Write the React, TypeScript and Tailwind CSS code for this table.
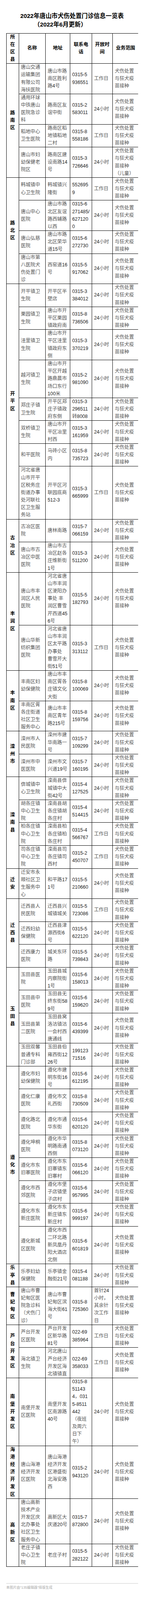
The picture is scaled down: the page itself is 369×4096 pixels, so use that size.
import React from 'react';

type Row = { n: string; a: string; p: string; t?: string; s?: string };
type Group = { d: string; rows: Row[] };

const W = '工作日';
const H = '24小时';
const SCOPE = '犬伤处置|与狂犬疫|苗接种';

const groups: Group[] = [
  {
    d: '路南区',
    rows: [
      { n: '唐山交通|运输集团|有限公司|海扶医院', a: '唐山市路|南区胜利|路4号', p: '0315-5|936551', t: W },
      { n: '通用环球|中铁唐山|医院急诊|科', a: '路南区友|谊中街', p: '0315-2|583011' },
      { n: '稻地中心|卫生医院', a: '路南区稻|地镇稻地|二村', p: '0315-8|558186', t: W },
      { n: '唐山市妇|幼保健老|院区', a: '路南区建|设南路14|号', p: '0315-3|726646', s: '犬伤处置|与狂犬疫|苗接种|（儿童）' },
    ],
  },
  {
    d: '路北区',
    rows: [
      { n: '韩城镇中|心卫生院', a: '韩城镇兴|隆街', p: '552695|9', t: W },
      { n: '唐山中心|医院', a: '唐山市路|北区友谊|路西辅路|以西', p: '0315-6|271485/|627120|0' },
      { n: '唐山弘慈|医院', a: '唐山市路|北区荣华|道15号', p: '0315-6|272730' },
      { n: '唐山市第|八医院犬|伤处置门|诊', a: '西窑道16|号', p: '0315-5|917062' },
    ],
  },
  {
    d: '开平区',
    rows: [
      { n: '开平镇卫|生院', a: '开平区半|壁店', p: '0315-3|384012' },
      { n: '栗园镇卫|生院', a: '唐山市开|平区栗园|镇政府南', p: '0315-8|736506' },
      { n: '洼里镇卫|生院', a: '唐山市开|平区洼里|镇政府东|侧', p: '0315-3|370219' },
      { n: '越河镇卫|生院', a: '唐山市开|平区开越|路鼎晨市|场口东行|100米', p: '0315-2|981090' },
      { n: '郑庄子镇|卫生院', a: '开平区郑|庄子镇政|府东侧', p: '0315-3|296511|转8008' },
      { n: '双桥镇卫|生院', a: '唐山市开|平区冶里|村西', p: '0315-3|161959' },
      { n: '和平医院', a: '马砖小区|内', p: '0315-8|735723' },
      { n: '河北省唐|山市开平|区税务庄|街道办事|处河联社|区卫生服|务站', a: '开平区河|联园底商|512-3', p: '0315-3|665999', t: W },
    ],
  },
  {
    d: '古冶区',
    rows: [
      { n: '古冶区医|院', a: '唐林南路', p: '0315-7|066159' },
      { n: '唐山市古|冶区中医|医院', a: '唐山市古|冶区赵各|庄维新街|1号', p: '0315-3|511200' },
    ],
  },
  {
    d: '丰润区',
    rows: [
      { n: '唐山市丰|润区人民|医院', a: '河北省唐|山市丰润|区浭阳办|事处 丰|润区曹雪|芹西道45|6号', p: '0315-5|182793' },
      { n: '唐山华新|纺织集团|医院', a: '河北省唐|山市丰润|区太平路|办事处|曹雪芹大|街51号', p: '0315-3|313112', t: W },
    ],
  },
  {
    d: '丰南区',
    rows: [
      { n: '丰南区妇|幼保健院', a: '唐山市丰|南区胥各|庄镇文化|大街', p: '0315-8|100069' },
      { n: '丰南区胥|各庄街道|社区卫生|服务中心', a: '唐山市丰|南区青年|路215号', p: '0315-8|159756' },
    ],
  },
  {
    d: '滦州市',
    rows: [
      { n: '滦州市人|民医院', a: '滦州市建|华南路一|号', p: '0315-7|109299' },
      { n: '滦州市中|医医院', a: '滦州市文|兴道19号', p: '0315-7|160195' },
    ],
  },
  {
    d: '滦南县',
    rows: [
      { n: '倴城镇中|心卫生院', a: '滦南县倴|城镇中大|街42号', p: '0315-4|127525' },
      { n: '胡各庄镇|中心卫生|院', a: '滦南县胡|各庄镇胡|各庄村', p: '0315-4|514415' },
      { n: '柏各庄镇|中心卫生|院', a: '滦南县柏|各庄镇柏|各庄村', p: '0315-4|566767', t: W },
      { n: '司各庄镇|中心卫生|院', a: '滦南县司|各庄镇司|西村', p: '0315-2|450707', t: W },
    ],
  },
  {
    d: '迁安',
    rows: [{ n: '迁安市永|顺社区卫|生服务中|心', a: '和平路17|1号', p: '0315-5|210660' }],
  },
  {
    d: '迁西县',
    rows: [
      { n: '迁西县人|民医院', a: '迁西县兴|城镇城关', p: '0315-5|723086', t: W },
      { n: '迁西妇幼|保健院', a: '迁西县津|源西街6|号', p: '0315-5|622120' },
      { n: '迁西康力|医院', a: '城关东环|路', p: '0315-5|739843' },
    ],
  },
  {
    d: '玉田县',
    rows: [
      { n: '玉田县医|院', a: '玉田县城|内察院街|1号', p: '0315-6|158013' },
      { n: '玉田县中|医院', a: '玉田县无|终东街58|9号', p: '0315-6|159620' },
      { n: '玉田县第|二医院', a: '玉田县窝|洛沽镇沽|一会村西|唐通线', p: '0315-6|439399' },
      { n: '玉田双馨|普通专科|门诊部', a: '玉田县伯|雍西街12|26号', p: '199123|71516' },
    ],
  },
  {
    d: '遵化市',
    rows: [
      { n: '遵化市妇|幼保健院', a: '遵化市建|明东街16|号', p: '0315-6|612195' },
      { n: '遵化仁康|医院', a: '遵化市文|礼西街', p: '0315-8|730509' },
      { n: '遵化路北|医院', a: '遵化市通|华东街', p: '0315-6|620120' },
      { n: '遵化坤桐|医院', a: '遵化市华|明路南通|西侧', p: '0315-8|073120' },
      { n: '遵化市东|旧寨医院', a: '遵化市东|旧寨镇东|旧寨村', p: '0315-6|066120' },
      { n: '遵化市西|郊医院', a: '遵化市堡|子店镇堡|子店村', p: '0315-6|957995' },
      { n: '遵化市东|新庄医院', a: '遵化市东|新庄镇东|新庄村', p: '0315-6|999197' },
      { n: '遵化新城|区医院', a: '遵化市西|二环北路|新凤凰丹|阳大酒店|北侧', p: '0315-6|601819' },
    ],
  },
  {
    d: '乐亭县',
    rows: [{ n: '乐亭妇幼|保健院', a: '乐亭镇金|融街21号', p: '0315-4|081188' }],
  },
  {
    d: '曹妃甸区',
    rows: [
      {
        n: '唐山市曹|妃甸区医|院急诊科|（犬伤门|诊）',
        a: '唐山市曹|妃甸区滨|海大街61|号',
        p: '0315-8|725360',
        t: '首针24|小时，|其余针|次工作|日',
      },
    ],
  },
  {
    d: '芦台开发区',
    rows: [
      { n: '芦台开发|区医院', a: '芦台开发|区新华路|81号', p: '022-69|385964', t: W },
      { n: '海北镇卫|生院', a: '河北唐山|芦台经济|开发区海|北镇镇直', p: '022-69|358033', t: W },
    ],
  },
  {
    d: '南堡开发区',
    rows: [
      {
        n: '南堡开发|区医院',
        a: '南堡开发|区南源路|40号',
        p: '0315-8|51143|4，031|5-8511|442|（夜班|及周六|日下|午）',
      },
    ],
  },
  {
    d: '海港经济开发区',
    rows: [{ n: '唐山海港|经济开发|区医院', a: '唐山海港|经济开发|区港盛街|北海安路|西', p: '0315-2|943120' }],
  },
  {
    d: '高新区',
    rows: [
      { n: '唐山高新|技术产业|开发区庆|北办事处|社区卫生|服务中心', a: '高新区大|庆道20号', p: '0315-7|872800' },
      { n: '老庄子镇|中心卫生|院', a: '老庄子村', p: '0315-5|282122' },
    ],
  },
];

// digits / latin in near-black, CJK in grey
function Mixed({ text }: { text: string }) {
  const parts = text.split(/([\x20-\x7E]+)/).filter((x) => x !== '');
  return (
    <>
      {parts.map((part, i) =>
        /^[\x20-\x7E]+$/.test(part) ? (
          <span key={i} className="text-[#1c1c1c]">
            {part}
          </span>
        ) : (
          <span key={i} className="text-[#555555]">
            {part}
          </span>
        )
      )}
    </>
  );
}

function Lines({ value }: { value: string }) {
  return (
    <div>
      {value.split('|').map((line, i) => (
        <div key={i} className="whitespace-pre">
          <Mixed text={line} />
        </div>
      ))}
    </div>
  );
}

const cell = 'flex items-center border-r border-black pl-[5px]';

function BodyRow({ row }: { row: Row }) {
  return (
    <div className="flex grow border-b border-black last:border-b-0">
      <div className={`${cell} w-[68.5px]`}>
        <Lines value={row.n} />
      </div>
      <div className={`${cell} w-[63px]`}>
        <Lines value={row.a} />
      </div>
      <div className={`${cell} w-[56px]`}>
        <Lines value={row.p} />
      </div>
      <div className={`${cell} w-[53px]`}>
        <Lines value={row.t ?? H} />
      </div>
      <div className="flex w-[65px] items-center pl-[5px]">
        <Lines value={row.s ?? SCOPE} />
      </div>
    </div>
  );
}

export default function App() {
  return (
    <div className="min-h-[4096px] bg-white font-['Liberation_Sans','Noto_Sans_CJK_SC',sans-serif] text-[12.3px] leading-[19.17px] text-black">
      {/* title */}
      <div className="pt-[29.8px] text-[15.4px] font-bold leading-[22px]">
        <div className="text-center">2022年唐山市犬伤处置门诊信息一览表</div>
        <div className="pl-[87px]">（2022年6月更新）</div>
      </div>

      {/* table */}
      <div className="ml-[16px] mt-[10.8px] w-[338px] border-l border-t border-black">
        <div className="flex border-b border-black font-bold">
          <div className="flex w-[31.5px] items-center justify-center border-r border-black text-center">
            <div>
              所<br />在<br />区<br />县
            </div>
          </div>
          <div className="flex w-[68.5px] items-center justify-center border-r border-black">名称</div>
          <div className="flex w-[63px] items-center justify-center border-r border-black">地址</div>
          <div className="flex w-[56px] items-center justify-center border-r border-black text-center">
            <div>
              联系电<br />话
            </div>
          </div>
          <div className="flex w-[53px] items-center justify-center border-r border-black text-center">
            <div>
              开放时<br />间
            </div>
          </div>
          <div className="flex w-[65px] items-center justify-center">业务范围</div>
        </div>

        {groups.map((g) => (
          <div key={g.d} className="flex border-b border-black">
            <div className="flex w-[31.5px] shrink-0 items-center justify-center border-r border-black font-bold">
              <div className="text-center">
                {g.d.split('').map((ch, i) => (
                  <div key={i}>{ch}</div>
                ))}
              </div>
            </div>
            <div className="flex flex-col">
              {g.rows.map((r, i) => (
                <BodyRow key={i} row={r} />
              ))}
            </div>
          </div>
        ))}
      </div>

      {/* footer */}
      <div className="ml-[16px] mt-[42px] w-[338px] border-t border-[#cccccc] pt-[4px] text-[8.9px] leading-[12px] text-[#aaaaaa]">
        本图片由“135编辑器”排版生成
      </div>
    </div>
  );
}
